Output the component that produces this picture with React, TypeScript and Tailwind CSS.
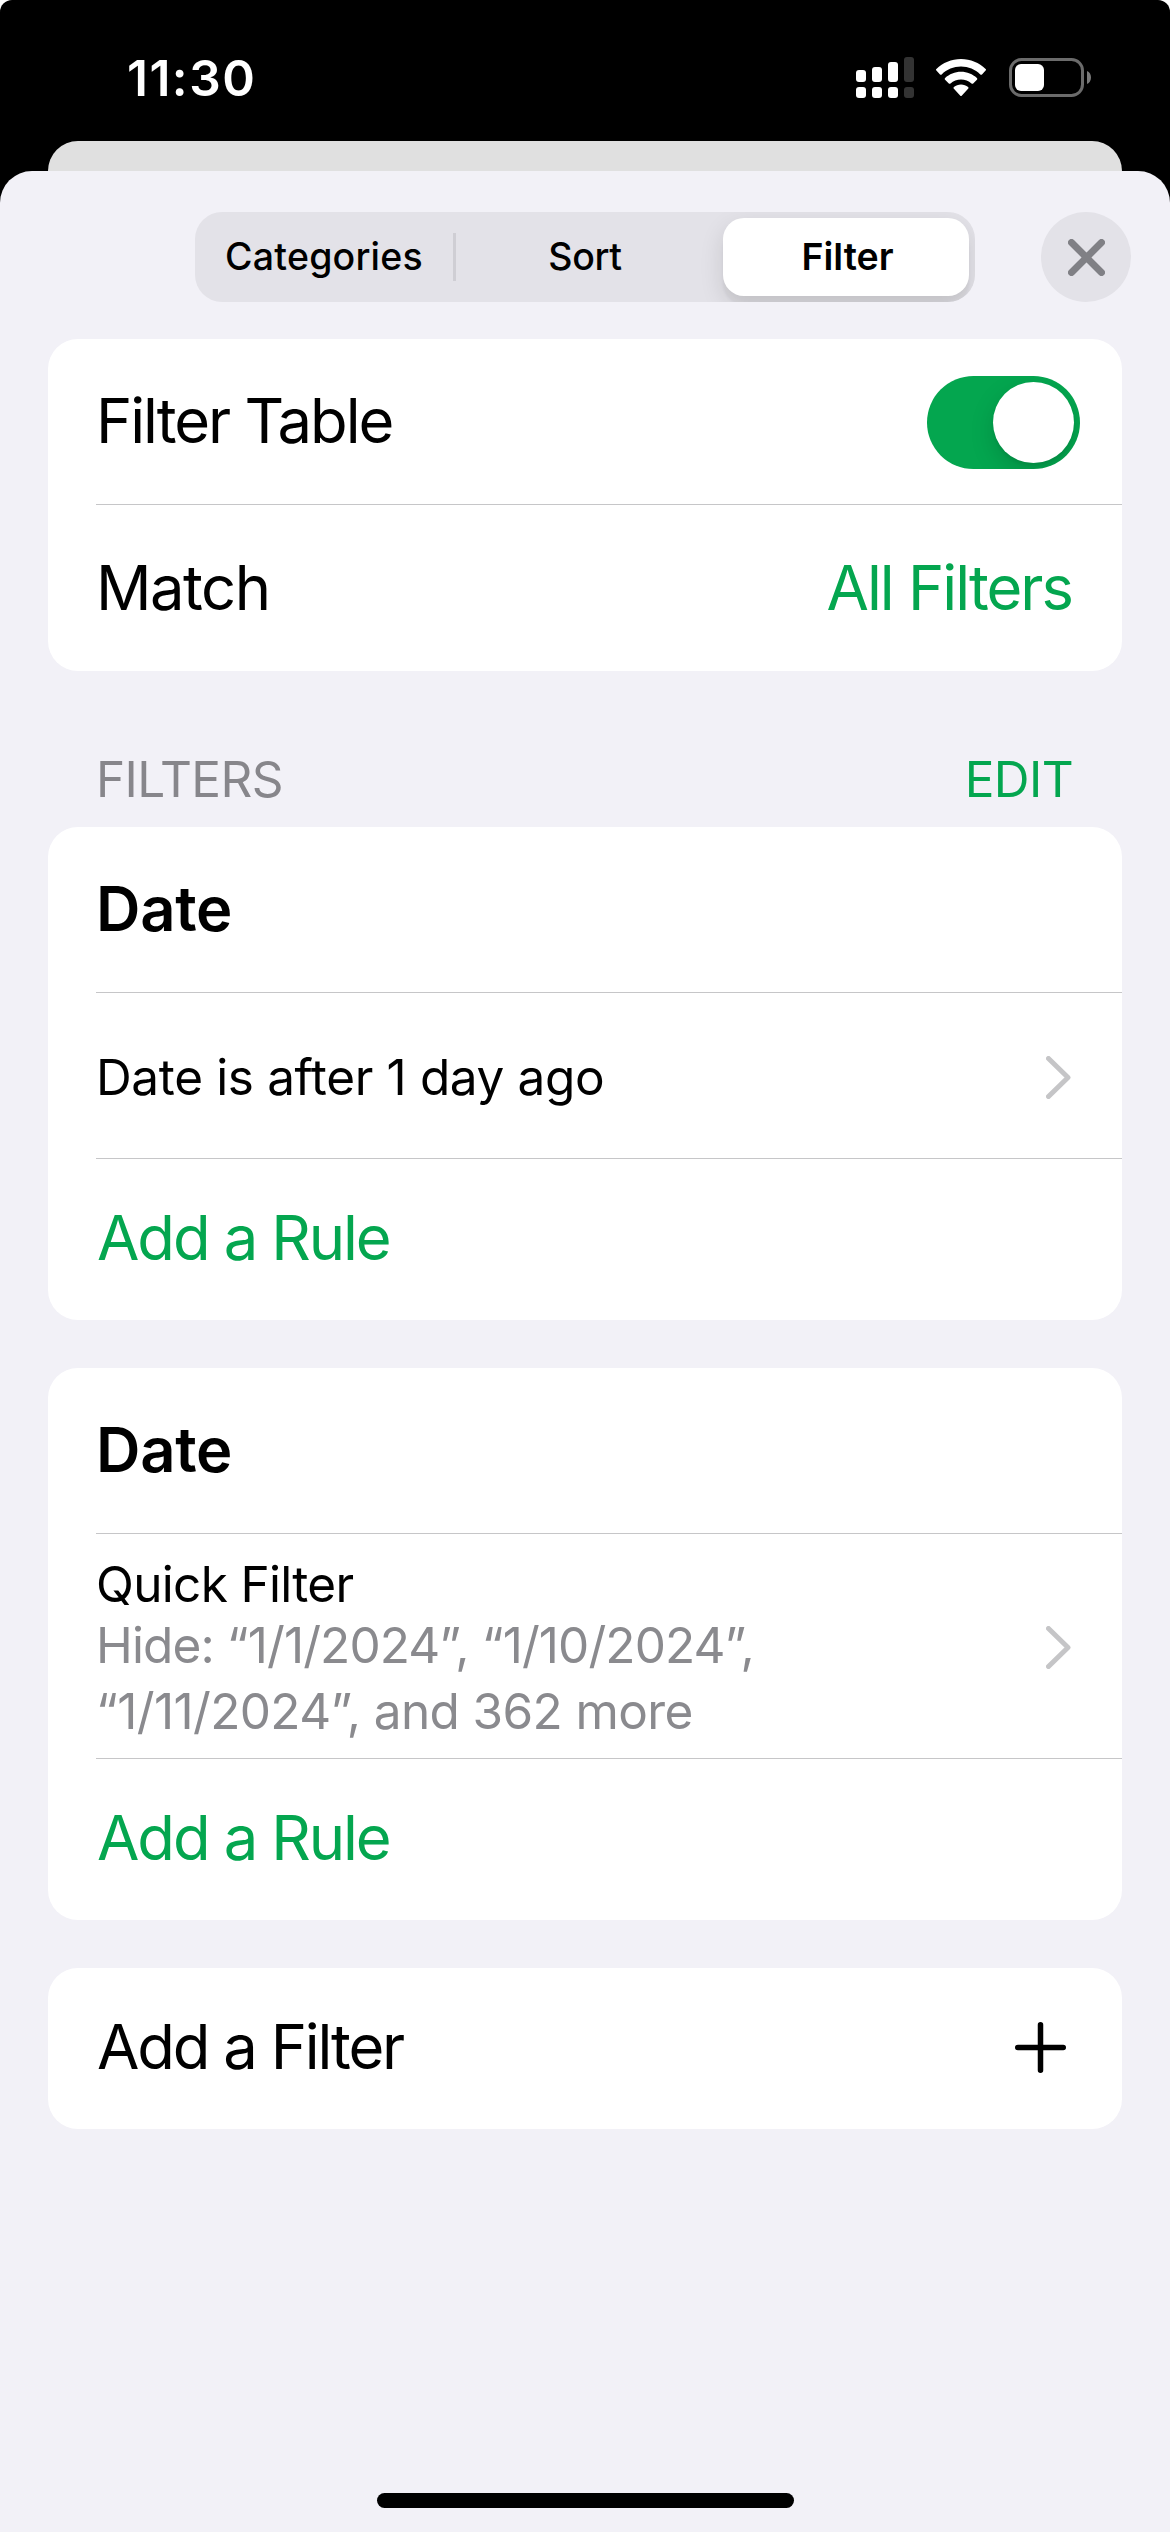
import type { ReactNode } from 'react'
import clsx from 'clsx'

const TABS = ['Categories', 'Sort', 'Filter']

function SignalIcon() {
  const bars = [
    { x: 0, top: 13 },
    { x: 16, top: 10 },
    { x: 32, top: 5 },
    { x: 48, top: 0, dim: true },
  ]

  return (
    <svg width="58" height="41" viewBox="0 0 58 41">
      {bars.map(({ x, top, dim }) => (
        <g key={x} fill={dim ? '#333333' : '#ffffff'}>
          <rect x={x} y={top} width="10" height={25 - top} rx="3" />
          <rect x={x} y="30" width="10" height="11" rx="3" />
        </g>
      ))}
    </svg>
  )
}

function WifiIcon() {
  return (
    <svg width="50" height="38" viewBox="0 0 50 38" fill="#ffffff">
      <path d="M25 0C34.5 0 43.2 3.8 49.6 9.9a1.2 1.2 0 0 1 0 1.7L46 15.4a1.2 1.2 0 0 1-1.7 0C39.2 10.5 32.4 7.6 25 7.6S10.8 10.5 5.7 15.4a1.2 1.2 0 0 1-1.7 0L.4 11.6a1.2 1.2 0 0 1 0-1.7C6.8 3.8 15.500 0 25 0Z" />
      <path d="M25 12.7c6.1 0 11.7 2.4 15.9 6.2a1.2 1.2 0 0 1 0 1.8l-3.7 3.7a1.2 1.2 0 0 1-1.7 0C32.7 21.9 29 20.4 25 20.4s-7.7 1.5-10.5 4a1.2 1.2 0 0 1-1.7 0l-3.7-3.7a1.2 1.2 0 0 1 0-1.8c4.2-3.8 9.8-6.2 15.9-6.2Z" />
      <path d="M25 25.4c2.7 0 5.2 1 7.1 2.6a1.2 1.2 0 0 1 0 1.8l-6.2 6.6a1.2 1.2 0 0 1-1.8 0l-6.2-6.6a1.2 1.2 0 0 1 0-1.8c1.9-1.6 4.4-2.6 7.1-2.6Z" />
    </svg>
  )
}

function BatteryIcon() {
  return (
    <svg width="82" height="39" viewBox="0 0 82 39">
      <rect x="1.5" y="1.5" width="72" height="36" rx="11" fill="none" stroke="#6b6b6b" strokeWidth="3" />
      <rect x="6" y="6" width="29" height="27" rx="6" fill="#ffffff" />
      <path d="M78 13c2.6 1 4 3.6 4 6.5s-1.4 5.5-4 6.5Z" fill="#7a7a7a" />
    </svg>
  )
}

function Chevron() {
  return (
    <svg
      className="mt-[3px] mr-[3px]"
      width="25"
      height="43"
      viewBox="0 0 25 43"
      fill="none"
      stroke="#c5c5c7"
      strokeWidth="5"
      strokeLinecap="round"
      strokeLinejoin="round"
    >
      <path d="M2.5 2.5L22 21.5L2.5 40.5" />
    </svg>
  )
}

function StatusBar() {
  return (
    <div className="flex h-[141px] items-start justify-between pr-[79px] pl-[127px]">
      <span className="mt-[48px] text-[49.5px] leading-[60px] font-semibold tracking-[1.5px] text-white">11:30</span>
      <div className="mt-[57px] flex items-start">
        <SignalIcon />
        <div className="mt-[2px] ml-[22px]">
          <WifiIcon />
        </div>
        <div className="mt-px ml-[23px]">
          <BatteryIcon />
        </div>
      </div>
    </div>
  )
}

function SegmentedControl({ active }: { active: string }) {
  return (
    <div className="flex h-[90px] w-[780px] items-center overflow-hidden rounded-[27px] bg-[#e3e2e8] p-[6px]">
      {TABS.map((tab) => (
        <div
          key={tab}
          className={clsx(
            'flex shrink-0 items-center justify-center text-[37.5px] text-black',
            tab === 'Categories' && 'h-[48px] w-[255px] border-r-[3px] border-[#cfced4] pr-[6px] font-medium tracking-[0.2px]',
            tab === 'Sort' && 'w-[267px] pr-[9px] font-medium tracking-[-0.3px]',
            tab === active &&
              'h-[78px] w-[246px] rounded-[21px] bg-white pl-[3px] font-semibold shadow-[0_9px_24px_rgba(0,0,0,0.12),0_9px_3px_rgba(0,0,0,0.04)]',
          )}
        >
          {tab}
        </div>
      ))}
    </div>
  )
}

function CloseButton() {
  return (
    <button type="button" aria-label="Close" className="flex size-[90px] items-center justify-center rounded-full bg-[#e3e2e8]">
      <svg width="37" height="37" viewBox="0 0 37 37" stroke="#808085" strokeWidth="7" strokeLinecap="round">
        <path d="M3.5 3.5L33.5 33.5M33.5 3.5L3.5 33.5" />
      </svg>
    </button>
  )
}

function Toggle() {
  return (
    <div
      role="switch"
      aria-checked="true"
      className="mt-[2px] flex h-[93px] w-[153px] items-center justify-end overflow-hidden rounded-full bg-[#04a64f] p-[6px]"
    >
      <div className="size-[81px] rounded-full bg-white shadow-[0_9px_24px_rgba(0,0,0,0.15),0_3px_3px_rgba(0,0,0,0.06)]" />
    </div>
  )
}

function Card({ children }: { children: ReactNode }) {
  return <section className="rounded-[30px] bg-white pl-[48px]">{children}</section>
}

function Row({ children, className, last }: { children: ReactNode; className?: string; last?: boolean }) {
  return (
    <div className={clsx('flex items-center justify-between pr-[48px]', !last && 'border-b border-[#c6c6c8]', className)}>
      {children}
    </div>
  )
}

function TitleRow({ title }: { title: string }) {
  return (
    <Row className="h-[166px]">
      <h3 className="text-[61.5px] font-semibold tracking-[-0.25px]">{title}</h3>
    </Row>
  )
}

function AddRuleRow() {
  return (
    <Row last className="h-[161px] pb-[2px]">
      <span className="pl-px text-[61.5px] tracking-[-2.1px] text-[#04a64f]">Add a Rule</span>
    </Row>
  )
}

export default function App() {
  return (
    <div className="h-[2532px] w-[1170px] overflow-hidden bg-white font-[Inter,'Liberation_Sans',sans-serif] text-black">
      <div className="flex h-full flex-col rounded-t-[12px] bg-black">
        <StatusBar />
        {/* Edge of the sheet behind */}
        <div className="mx-[48px] h-[30px] shrink-0 rounded-t-[30px] bg-[#e0e0e0]" />

        <main className="flex flex-1 flex-col rounded-t-[32px] bg-[#f2f1f7]">
          <header className="flex items-center justify-end gap-[66px] pt-[41px] pr-[39px]">
            <SegmentedControl active="Filter" />
            <CloseButton />
          </header>

          <div className="mt-[37px] px-[48px]">
            <Card>
              <Row className="h-[166px] pr-[42px]!">
                <span className="text-[61.5px] tracking-[-2.05px]">Filter Table</span>
                <Toggle />
              </Row>
              <Row last className="h-[166px]">
                <span className="text-[61.5px] tracking-[-1.5px]">Match</span>
                <span className="mr-[2px] text-[61.5px] tracking-[-2px] text-[#04a64f]">All Filters</span>
              </Row>
            </Card>

            <div className="mt-[78px] mb-[18px] flex h-[60px] items-center justify-between px-[48px] text-[49.5px] tracking-[-0.6px]">
              <h2 className="text-[#87868b]">FILTERS</h2>
              <span className="mr-px text-[#04a64f]">EDIT</span>
            </div>

            <div className="flex flex-col gap-[48px]">
              <Card>
                <TitleRow title="Date" />
                <Row className="h-[166px]">
                  <span className="pt-[3px] text-[49.5px] tracking-[-0.36px]">Date is after 1 day ago</span>
                  <Chevron />
                </Row>
                <AddRuleRow />
              </Card>

              <Card>
                <TitleRow title="Date" />
                <Row className="h-[225px]">
                  <div className="pt-[8px] text-[49.5px] leading-[66px]">
                    <p className="leading-[56px] tracking-[-0.68px]">Quick Filter</p>
                    <p className="tracking-[-0.89px] text-[#8a8a8e]">Hide: “1/1/2024”, “1/10/2024”,</p>
                    <p className="tracking-[-0.62px] text-[#8a8a8e]">“1/11/2024”, and 362 more</p>
                  </div>
                  <Chevron />
                </Row>
                <AddRuleRow />
              </Card>

              <Card>
                <Row last className="h-[161px] pr-[56px]! pb-[2px]">
                  <span className="pl-px text-[61.5px] tracking-[-2.2px]">Add a Filter</span>
                  <svg width="51" height="51" viewBox="0 0 51 51" stroke="#000000" strokeWidth="5.5" strokeLinecap="round">
                    <path d="M25.5 2.75V48.25M2.75 25.5H48.25" />
                  </svg>
                </Row>
              </Card>
            </div>
          </div>

          {/* Home indicator */}
          <div className="mx-auto mt-auto mb-[24px] h-[15px] w-[417px] rounded-full bg-black" />
        </main>
      </div>
    </div>
  )
}
